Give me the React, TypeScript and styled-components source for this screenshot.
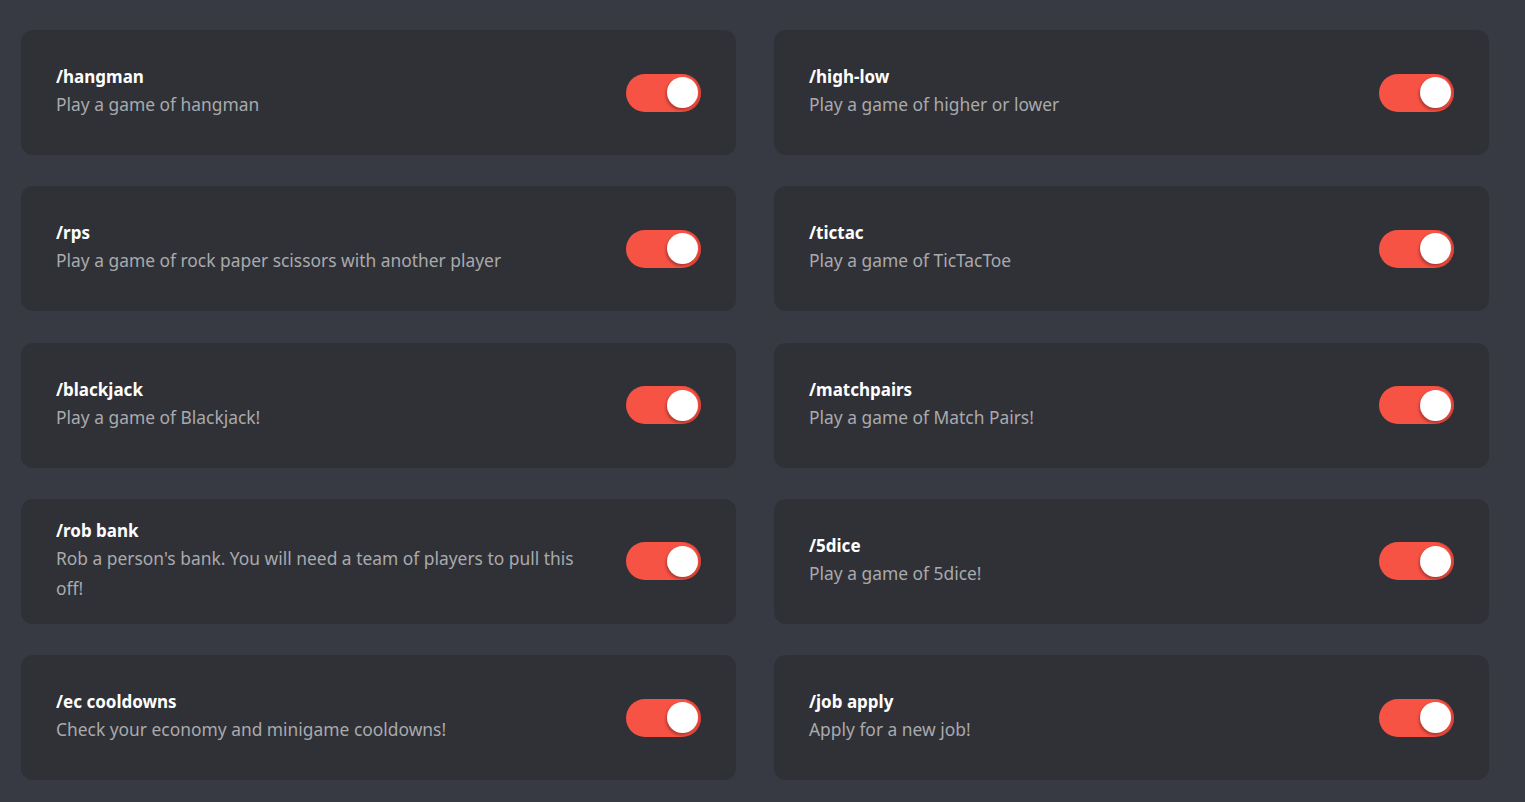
import React from "react";
import styled, { createGlobalStyle } from "styled-components";

const Global = createGlobalStyle`
  html, body { margin: 0; padding: 0; background: #373a43; }
  body { font-family: "Noto Sans", "Open Sans", sans-serif; }
  * { box-sizing: border-box; }
`;

const Page = styled.div`
  background: #373a43;
  min-height: 802px;
  padding: 30px 36px 22px 21px;
  display: grid;
  grid-template-columns: 715px 715px;
  column-gap: 38px;
  row-gap: 31.25px;
  grid-auto-rows: 125px;
`;

const Card = styled.div`
  background: #303136;
  border-radius: 12px;
  padding: 0 35px;
  display: flex;
  align-items: center;
  justify-content: space-between;
  gap: 35px;
`;

const Info = styled.div`
  display: flex;
  flex-direction: column;
  min-width: 0;
  max-width: 535px;
  margin-top: -1px;
`;

const Title = styled.div`
  color: #ffffff;
  font-weight: 700;
  font-size: 17px;
  line-height: 24px;
`;

const Desc = styled.div`
  color: #a9aaad;
  font-size: 17.4px;
  line-height: 30px;
`;

const Track = styled.div<{ $on: boolean }>`
  flex: 0 0 auto;
  width: 75px;
  height: 38px;
  border-radius: 19px;
  background: ${(p) => (p.$on ? "#f65345" : "#55575e")};
  box-shadow: inset -2px 0 0 rgba(200, 50, 40, 0.5);
  position: relative;
`;

const Knob = styled.div<{ $on: boolean }>`
  position: absolute;
  top: 3.5px;
  left: ${(p) => (p.$on ? "41px" : "4px")};
  width: 31px;
  height: 31px;
  border-radius: 50%;
  background: #ffffff;
  box-shadow: -1px 2px 3px rgba(90, 20, 15, 0.45);
`;

const items: [string, string][] = [
  ["/hangman", "Play a game of hangman"],
  ["/high-low", "Play a game of higher or lower"],
  ["/rps", "Play a game of rock paper scissors with another player"],
  ["/tictac", "Play a game of TicTacToe"],
  ["/blackjack", "Play a game of Blackjack!"],
  ["/matchpairs", "Play a game of Match Pairs!"],
  ["/rob bank", "Rob a person's bank. You will need a team of players to pull this off!"],
  ["/5dice", "Play a game of 5dice!"],
  ["/ec cooldowns", "Check your economy and minigame cooldowns!"],
  ["/job apply", "Apply for a new job!"],
];

export default function App() {
  return (
    <>
      <Global />
      <Page>
        {items.map(([t, d]) => (
          <Card key={t}>
            <Info>
              <Title>{t}</Title>
              <Desc>{d}</Desc>
            </Info>
            <Track $on>
              <Knob $on />
            </Track>
          </Card>
        ))}
      </Page>
    </>
  );
}
